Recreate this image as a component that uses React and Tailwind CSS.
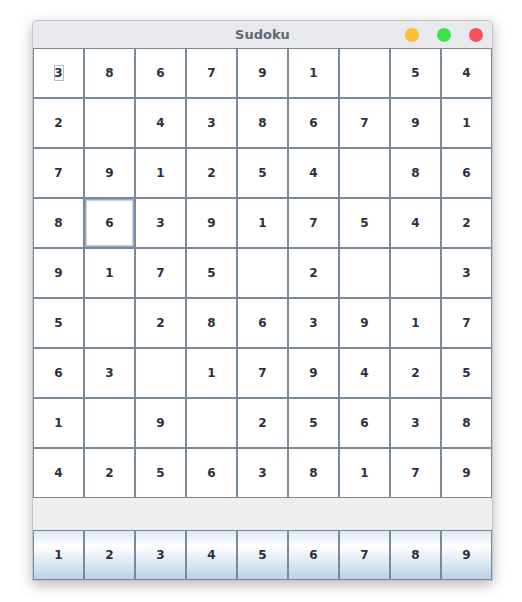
const board = [
  [3, 8, 6, 7, 9, 1, 0, 5, 4],
  [2, 0, 4, 3, 8, 6, 7, 9, 1],
  [7, 9, 1, 2, 5, 4, 0, 8, 6],
  [8, 6, 3, 9, 1, 7, 5, 4, 2],
  [9, 1, 7, 5, 0, 2, 0, 0, 3],
  [5, 0, 2, 8, 6, 3, 9, 1, 7],
  [6, 3, 0, 1, 7, 9, 4, 2, 5],
  [1, 0, 9, 0, 2, 5, 6, 3, 8],
  [4, 2, 5, 6, 3, 8, 1, 7, 9],
]

function Cell({ value, r, c }) {
  const selected = r === 3 && c === 1
  const caret = r === 0 && c === 0
  return (
    <div
      className={
        selected
          ? 'h-[50px] border border-[#7a8a99] bg-white p-0'
          : 'h-[50px] border border-[#7a8a99] bg-white flex items-center justify-center'
      }
    >
      {selected ? (
        <div className="h-full w-full border border-[#97adc4]">
          <div className="h-full w-full border border-[#c0d1e3] flex items-center justify-center">
            <span>{value}</span>
          </div>
        </div>
      ) : caret ? (
        <span className="w-[10px] h-[16px] border border-[#a9bcd0] flex items-center justify-center">
          {value}
        </span>
      ) : (
        <span>{value || ''}</span>
      )}
    </div>
  )
}

export default function App() {
  return (
    <div className="min-h-screen bg-white pt-[20px] pl-[32px]">
      <div
        className="w-[461px] border border-[#c4c4c4] rounded-t-[5px] bg-[#eeeeee] shadow-[0_4px_14px_rgba(0,0,0,0.28)]"
        style={{ fontFamily: '"DejaVu Sans", "Liberation Sans", sans-serif' }}
      >
        {/* title bar */}
        <div className="relative h-[27px] rounded-t-[5px] bg-[#e8e9ec] flex items-center justify-center">
          <span className="text-[13px] font-bold text-[#5e6878]">Sudoku</span>
          <div className="absolute right-[9px] top-[7px] flex gap-[18px]">
            <span className="w-[14px] h-[14px] rounded-full bg-[#fbbf35]" />
            <span className="w-[14px] h-[14px] rounded-full bg-[#3ee24a]" />
            <span className="w-[14px] h-[14px] rounded-full bg-[#f65258]" />
          </div>
        </div>

        {/* board */}
        <div className="grid grid-cols-9 w-[459px] text-[12px] font-bold text-[#2e2f3a]">
          {board.map((row, r) =>
            row.map((v, c) => <Cell key={r + '-' + c} value={v} r={r} c={c} />)
          )}
        </div>

        <div className="h-[32px] bg-[#eeeeee]" />

        {/* number buttons */}
        <div className="grid grid-cols-9 w-[459px] text-[12px] font-bold text-[#2e2f3a]">
          {[1, 2, 3, 4, 5, 6, 7, 8, 9].map((n) => (
            <button
              key={n}
              className="h-[50px] border border-[#7a8a99] bg-gradient-to-b from-[#dde8f3] via-[#ffffff] via-30% to-[#bcd2e8] flex items-center justify-center"
            >
              {n}
            </button>
          ))}
        </div>
      </div>
    </div>
  )
}
